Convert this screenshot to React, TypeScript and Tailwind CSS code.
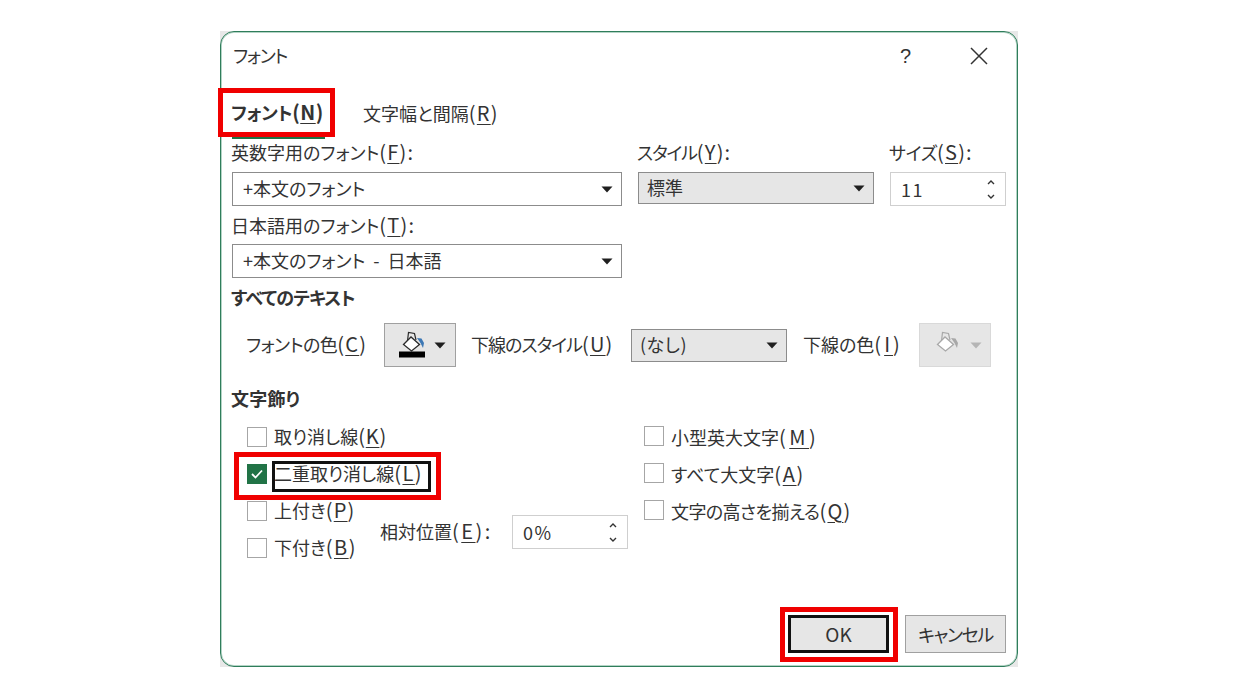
import React from "react";

const Caret = ({ color = "#1f1f1f" }: { color?: string }) => (
  <svg width="12" height="7" viewBox="0 0 12 7" className="shrink-0">
    <polygon points="0.5,0.5 11.5,0.5 6,6.5" fill={color} />
  </svg>
);

const L = ({
  pre,
  k,
  post = ")",
  tp = "",
  tk = "text-[20px] tracking-[1.2px]",
}: {
  pre: string;
  k: string;
  post?: string;
  tp?: string;
  tk?: string;
}) => (
  <span className="inline-block -translate-x-px -translate-y-px whitespace-nowrap">
    <span className={tp}>{pre}</span>
    <span className={tk}>
      (<span className="underline underline-offset-[3px] decoration-1">{k}</span>
      {post}
    </span>
  </span>
);

const Select = ({ text, cls }: { text: string; cls: string }) => (
  <div className={`flex items-center justify-between border pl-[10px] pr-[8px] ${cls}`}>
    <span className="-translate-y-px whitespace-nowrap [word-spacing:4px]">{text}</span>
    <Caret />
  </div>
);

const Spin = ({ text, cls }: { text: string; cls: string }) => (
  <div className={`flex items-center justify-between border border-[#cfcfcf] bg-white pl-[10px] pr-[8px] ${cls}`}>
    <span className="tracking-[1.5px]">{text}</span>
    <svg width="12" height="24" viewBox="0 0 12 24" fill="none" stroke="#333" strokeWidth="1.4">
      <path d="M3 7 L6 4 L9 7" />
      <path d="M3 18 L6 21 L9 18" />
    </svg>
  </div>
);

const Check = ({ checked = false }: { checked?: boolean }) =>
  checked ? (
    <div className="flex h-[20px] w-[20px] shrink-0 items-center justify-center bg-[#217346]">
      <svg width="14" height="12" viewBox="0 0 14 12" fill="none" stroke="white" strokeWidth="1.8">
        <path d="M2 6 L5.5 9.5 L12 2.5" />
      </svg>
    </div>
  ) : (
    <div className="h-[20px] w-[20px] shrink-0 border border-[#a6a6a6] bg-white" />
  );

const CheckRow = ({
  pre,
  k,
  checked,
  tp,
  tk,
  wrap = "",
}: {
  pre: string;
  k: string;
  checked?: boolean;
  tp?: string;
  tk?: string;
  wrap?: string;
}) => (
  <div className="flex h-[37px] items-center gap-[8px]">
    <Check checked={checked} />
    <span className={wrap}>
      <L pre={pre} k={k} tp={tp} tk={tk} />
    </span>
  </div>
);

const Bucket = ({ dim = false }: { dim?: boolean }) => {
  const line = dim ? "#a8a8a8" : "#2b2b2b";
  const blue = dim ? "#a8a8a8" : "#3d78b5";
  return (
    <svg width="28" height="30" viewBox="0 0 28 30" fill="none" className="shrink-0">
      <path d="M9.5 11 L10.5 2.5 L16.5 3.5 L18 10" stroke={line} strokeWidth="1.2" />
      <path d="M5.5 14.5 L13 7 L21.5 14.5 L13.5 21 Z" fill="white" stroke={line} strokeWidth="1.3" />
      <path d="M19 8 L23.5 8.5 L26 13 L25 18 L22.5 13 Z" fill={blue} />
      {!dim && <rect x="1" y="21.5" width="26" height="6" fill="#000000" />}
    </svg>
  );
};

export default function App() {
  return (
    <div className="h-[700px] w-full bg-white pl-[220px] pt-[31px] text-[18px] leading-[26px] text-[#333333] font-['Noto_Sans_CJK_JP',sans-serif] [font-feature-settings:'palt']">
      <div className="h-[636px] w-[798px] bg-[#e8e8e8]">
        <div className="relative flex h-full w-full flex-col rounded-[14px] border border-[#2f7d5b] bg-white shadow-[inset_0_0_0_1px_#b4d4c6]">
          <div className="flex h-[48px] shrink-0 items-center justify-between pl-[12px] pr-[29px]">
            <span className="-translate-y-px tracking-[-1.2px]">フォント</span>
            <div className="flex items-center gap-[59px]">
              <span className="font-['Liberation_Sans',sans-serif] text-[20px]">?</span>
              <svg width="18" height="18" viewBox="0 0 18 18" stroke="#333" strokeWidth="1.5">
                <path d="M1 1 L17 17 M17 1 L1 17" />
              </svg>
            </div>
          </div>

          <div className="mt-[12px] flex h-[47px] shrink-0 items-end pl-[11px]">
            <div className="relative flex h-[47px] w-[93px] items-center border-b-2 border-[#217346] pb-[3px] font-bold whitespace-nowrap">
              <L pre="フォント" k="N" tp="tracking-[-0.3px]" tk="text-[20px] tracking-[0.5px]" />
              <div className="absolute -left-[14px] -top-[4px] h-[49px] w-[117px] border-[5px] border-[#f00000]" />
            </div>
            <div className="ml-[39px] flex h-[47px] items-center pb-[3px]">
              <L pre="文字幅と間隔" k="R" />
            </div>
          </div>

          <div className="mt-[1px] flex shrink-0 gap-[16px] pl-[11px]">
            <div className="flex w-[390px] flex-col">
              <L pre="英数字用のフォント" k="F" post="):" />
              <Select text="+本文のフォント" cls="mt-[6px] h-[34px] border-[#8c8c8c]" />
              <div className="mt-[7px]">
                <L pre="日本語用のフォント" k="T" post="):" />
              </div>
              <Select text="+本文のフォント - 日本語" cls="mt-[5px] h-[34px] border-[#8c8c8c]" />
            </div>
            <div className="flex w-[236px] flex-col">
              <L pre="スタイル" k="Y" post="):" tp="tracking-[-1.2px]" />
              <Select text="標準" cls="mt-[6px] h-[32px] border-[#8c8c8c] bg-[#e6e6e6] !pl-[8px]" />
            </div>
            <div className="flex w-[116px] flex-col">
              <L pre="サイズ" k="S" post="):" tp="tracking-[-0.3px]" />
              <Spin text="11" cls="mt-[6px] h-[34px]" />
            </div>
          </div>

          <div className="mt-[7px] -translate-x-px -translate-y-px pl-[11px] font-bold tracking-[-0.8px]">すべてのテキスト</div>

          <div className="mt-[12px] flex h-[44px] shrink-0 items-center pl-[26px]">
            <div className="w-[137px]">
              <L pre="フォントの色" k="C" tp="tracking-[-0.5px]" />
            </div>
            <div className="flex h-[44px] w-[72px] items-center gap-[8px] border border-[#a0a0a0] bg-[#e6e6e6] pl-[13px]">
              <Bucket />
              <Caret />
            </div>
            <div className="ml-[16px] w-[159px]">
              <L pre="下線のスタイル" k="U" tp="tracking-[-1px]" />
            </div>
            <Select text="(なし)" cls="h-[33px] w-[156px] border-[#8c8c8c] bg-[#e6e6e6] !pl-[8px] tracking-[0.5px]" />
            <div className="ml-[17px] w-[115px]">
              <L pre="下線の色" k="I" tk="text-[20px] tracking-[3px]" />
            </div>
            <div className="flex h-[44px] w-[72px] items-center gap-[10px] border border-[#d9d9d9] bg-[#e6e6e6] pl-[12px]">
              <Bucket dim />
              <Caret color="#b5b5b5" />
            </div>
          </div>

          <div className="mt-[19px] -translate-x-px -translate-y-px pl-[11px] font-bold tracking-[0.2px]">文字飾り</div>

          <div className="mt-[6px] flex shrink-0 gap-[16px] pl-[26px]">
            <div className="flex w-[381px] flex-col">
              <CheckRow pre="取り消し線" k="K" tk="text-[20px] tracking-[0.8px]" />
              <div className="relative">
                <CheckRow pre="二重取り消し線" k="L" checked tk="text-[20px] tracking-[1.5px]" />
                <div className="absolute left-[25px] top-[6px] h-[31px] w-[159px] border-[3px] border-[#111111]" />
                <div className="absolute -left-[13px] top-[-3px] h-[48px] w-[207px] border-[5px] border-[#f00000]" />
              </div>
              <div className="flex items-center">
                <div className="flex w-[133px] flex-col">
                  <CheckRow pre="上付き" k="P" tk="text-[20px] tracking-[1.2px]" />
                  <CheckRow pre="下付き" k="B" tk="text-[20px] tracking-[1.5px]" />
                </div>
                <div className="mt-[6px] w-[132px] pl-px">
                  <L pre="相対位置" k="E" post="):" tk="text-[20px] tracking-[2.5px]" />
                </div>
                <Spin text="0%" cls="mt-[6px] h-[34px] w-[116px]" />
              </div>
            </div>
            <div className="-mt-px flex flex-col">
              <CheckRow pre="小型英大文字" k="M" tk="text-[20px] tracking-[3.5px]" wrap="translate-y-[2px]" />
              <CheckRow pre="すべて大文字" k="A" tk="text-[20px] tracking-[1.7px]" wrap="translate-y-[2px]" />
              <CheckRow pre="文字の高さを揃える" k="Q" tp="tracking-[-0.6px]" wrap="translate-y-[2px]" />
            </div>
          </div>

          <div className="mt-auto flex shrink-0 justify-end gap-[16px] pb-[13px] pr-[11px]">
            <div className="relative flex h-[38px] w-[101px] items-center justify-center border-[3px] border-[#111111] bg-[#e6e6e6] text-[19px]">
              OK
              <div className="absolute -left-[11px] -top-[11px] h-[55px] w-[118px] border-[5px] border-[#f00000]" />
            </div>
            <div className="flex h-[38px] w-[101px] items-center justify-center border border-[#a0a0a0] bg-[#e6e6e6] tracking-[-1.4px]">
              キャンセル
            </div>
          </div>
        </div>
      </div>
    </div>
  );
}
